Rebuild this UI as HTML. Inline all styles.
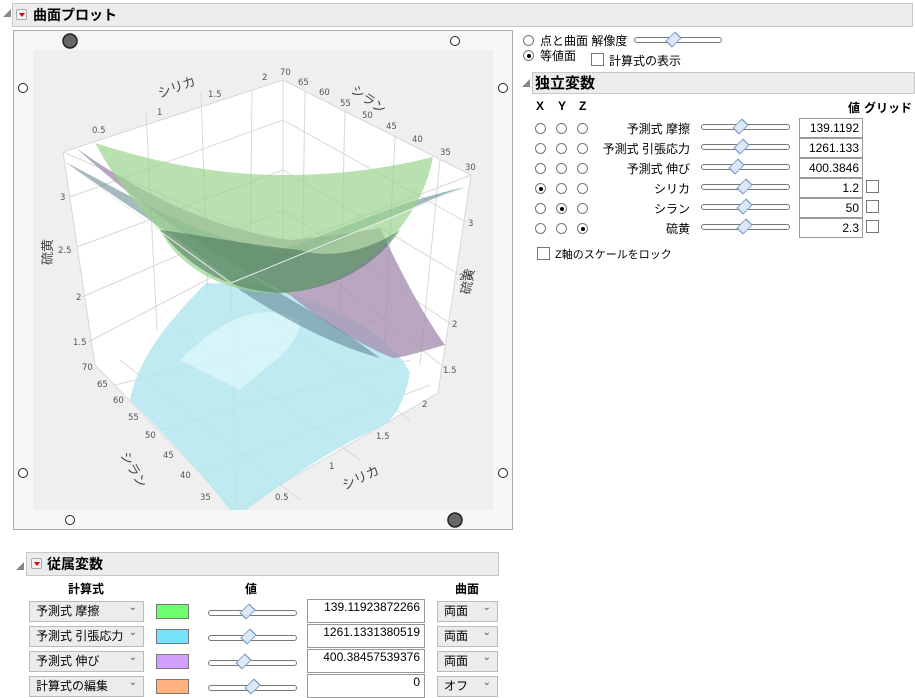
<!DOCTYPE html>
<html><head><meta charset="utf-8">
<style>
*{box-sizing:border-box;margin:0;padding:0}
body{width:915px;height:697px;background:#fff;font-family:"Liberation Sans","Noto Sans CJK JP",sans-serif;font-size:12px;color:#000;position:relative;overflow:hidden}
.a{position:absolute}
.hdr{position:absolute;background:#ececec;border:1px solid #c8c8c8;font-weight:bold;font-size:14px;padding-left:14px;line-height:22px}
.tri{position:absolute;width:0;height:0;border-left:8px solid transparent;border-bottom:8px solid #888}
.red{position:absolute;width:11px;height:11px;border:1px solid #aaa;background:#f4f4f4;border-radius:2px}
.red:after{content:"";position:absolute;left:2px;top:3px;border-left:3px solid transparent;border-right:3px solid transparent;border-top:4px solid #d00}
.rb{position:absolute;width:11px;height:11px;border:1px solid #777;border-radius:50%;background:#fff}
.rb.on:after{content:"";position:absolute;left:2.5px;top:2.5px;width:4px;height:4px;border-radius:50%;background:#000}
.cb{position:absolute;width:13px;height:13px;border:1px solid #777;background:#fff}
.sl{position:absolute;height:6px;border:1px solid #777;border-radius:3px;background:#fff}
.dm{position:absolute;width:11px;height:11px;border:1px solid #7a9cc6;background:#dce8f8;transform:rotate(45deg) scale(.85,1.25)}
.tb{position:absolute;border:1px solid #999;background:#fff;text-align:right;padding-right:3px;font-size:12px}
.cmb{position:absolute;border:1px solid #bbb;background:#ececec;font-size:12px;padding-left:6px;line-height:18px}
.cmb:after{content:"⌄";position:absolute;right:6px;top:-3px;font-size:10px;color:#555}
.lab{position:absolute;text-align:right;font-size:12px}
.sw{position:absolute;width:33px;height:15px;border:1px solid #777}
</style></head><body>

<div class="tri" style="left:3px;top:9px"></div>
<div class="hdr" style="left:12px;top:3px;width:901px;height:24px;padding-left:20px">曲面プロット</div>
<div class="red" style="left:16px;top:9px"></div>

<div class="a" style="left:13px;top:30px;width:500px;height:500px;border:1px solid #aaa;background:#f7f7f7"></div>
<svg class="a" style="left:13px;top:30px" width="500" height="500" viewBox="13 30 500 500">
<rect x="33" y="50" width="460" height="460" fill="#efefef"/>
<polygon points="63,152 283,80 471,175 438,393 236,510 95,365" fill="#fff"/>
<g stroke="#d8d8d8" stroke-width="1" fill="none">
<line x1="283" y1="80" x2="283" y2="247"/><line x1="63" y1="152" x2="283" y2="80"/><line x1="283" y1="80" x2="471" y2="175"/>
<line x1="63" y1="152" x2="95" y2="365"/><line x1="471" y1="175" x2="438" y2="393"/><line x1="231" y1="283" x2="236" y2="510"/>
<line x1="95" y1="365" x2="236" y2="510"/><line x1="236" y1="510" x2="438" y2="393"/>
<line x1="63" y1="152" x2="283" y2="247"/><line x1="283" y1="247" x2="471" y2="175"/>
<line x1="146" y1="111" x2="157" y2="330"/><line x1="201" y1="93" x2="208" y2="300"/><line x1="252" y1="90" x2="250" y2="280"/>
<line x1="305" y1="91" x2="302" y2="290"/><line x1="345" y1="110" x2="340" y2="320"/><line x1="395" y1="137" x2="385" y2="340"/><line x1="440" y1="160" x2="420" y2="365"/>
<line x1="70" y1="197" x2="283" y2="120"/><line x1="77" y1="247" x2="283" y2="170"/><line x1="82" y1="297" x2="283" y2="210"/><line x1="88" y1="342" x2="283" y2="240"/>
<line x1="283" y1="120" x2="466" y2="222"/><line x1="283" y1="170" x2="460" y2="275"/><line x1="283" y1="210" x2="452" y2="325"/><line x1="283" y1="240" x2="445" y2="368"/>
<line x1="115" y1="385" x2="380" y2="320"/><line x1="160" y1="430" x2="410" y2="360"/><line x1="200" y1="472" x2="430" y2="385"/>
<line x1="120" y1="360" x2="300" y2="500"/><line x1="180" y1="330" x2="360" y2="460"/><line x1="250" y1="300" x2="410" y2="420"/>
</g>
<path d="M130,400 C140,350 180,310 206,283 L260,285 C320,300 390,330 410,373 C405,400 395,420 380,427 C340,445 300,470 246,510 L230,510 C200,470 160,430 130,400 Z" fill="#b4e6ee" opacity=".85"/>
<path d="M180,360 C220,320 260,300 300,320 C300,350 260,370 240,390 C220,380 200,370 180,360Z" fill="#e4fcff" opacity=".6"/>
<path d="M76,148 C150,200 220,230 290,240 C330,236 360,232 380,228 C400,270 420,310 445,345 C420,352 405,357 393,358 C360,345 320,320 290,295 C220,260 150,215 76,148Z" fill="#a791b3" opacity=".8"/>
<path d="M65,162 C140,215 200,250 240,290 C300,330 350,350 380,358 C330,320 290,300 250,275 C330,250 420,200 466,187 C400,200 330,235 280,250 C200,240 140,200 65,162Z" fill="#5a808d" opacity=".55"/>
<path d="M95,143 C180,170 240,175 283,175 C350,175 400,165 433,157 C420,230 350,290 280,293 C230,295 180,270 160,230 C130,200 110,170 95,143Z" fill="#9bd48f" opacity=".7"/>
<path d="M160,230 C190,270 230,290 280,293 C340,290 380,260 400,230 C370,250 330,260 300,250 C250,245 200,235 160,230Z" fill="#3e6a55" opacity=".5"/>
<line x1="231" y1="283" x2="466" y2="187" stroke="#eee" stroke-width="1"/>
<line x1="65" y1="162" x2="231" y2="283" stroke="#eee" stroke-width="1"/>
<g font-family="DejaVu Sans,sans-serif" font-size="8.5" fill="#555">
<text x="92" y="133">0.5</text><text x="157" y="115">1</text><text x="208" y="97">1.5</text><text x="262" y="80">2</text><text x="280" y="75">70</text>
<text x="298" y="85">65</text><text x="319" y="95">60</text><text x="340" y="106">55</text><text x="362" y="118">50</text><text x="386" y="129">45</text><text x="412" y="142">40</text><text x="440" y="155">35</text><text x="465" y="170">30</text>
<text x="60" y="200">3</text><text x="58" y="253">2.5</text><text x="76" y="300">2</text><text x="73" y="345">1.5</text><text x="82" y="370">70</text>
<text x="97" y="387">65</text><text x="113" y="403">60</text><text x="128" y="420">55</text><text x="145" y="438">50</text><text x="163" y="458">45</text><text x="180" y="478">40</text><text x="200" y="500">35</text>
<text x="468" y="226">3</text><text x="459" y="280">2.5</text><text x="452" y="327">2</text><text x="443" y="373">1.5</text><text x="422" y="407">2</text><text x="376" y="439">1.5</text><text x="329" y="469">1</text><text x="275" y="500">0.5</text>
</g>
<g font-size="13" fill="#444" font-family="Noto Sans CJK JP,sans-serif">
<text x="160" y="98" transform="rotate(-20 160 98)">シリカ</text>
<text x="350" y="92" transform="rotate(35 350 92)">シラン</text>
<text x="52" y="265" transform="rotate(-90 52 265)">硫黄</text>
<text x="470" y="295" transform="rotate(-80 470 295)">硫黄</text>
<text x="345" y="490" transform="rotate(-25 345 490)">シリカ</text>
<text x="120" y="455" transform="rotate(60 120 455)">シラン</text>
</g>
<g stroke="#222" stroke-width="1" fill="#fff">
<circle cx="70" cy="41" r="7" fill="#666" stroke-width="1.5"/><circle cx="455" cy="41" r="4.5"/>
<circle cx="23" cy="88" r="4.5"/><circle cx="503" cy="88" r="4.5"/>
<circle cx="23" cy="473" r="4.5"/><circle cx="503" cy="473" r="4.5"/>
<circle cx="70" cy="520" r="4.5"/><circle cx="455" cy="520" r="7" fill="#666" stroke-width="1.5"/>
</g>
</svg>

<!-- right panel -->
<div class="rb" style="left:523px;top:35px"></div><div class="a" style="left:540px;top:32px">点と曲面 解像度</div>
<div class="sl" style="left:634px;top:37px;width:88px"></div><div class="dm" style="left:668px;top:34px"></div>
<div class="rb on" style="left:523px;top:50px"></div><div class="a" style="left:540px;top:47px">等値面</div>
<div class="cb" style="left:591px;top:53px"></div><div class="a" style="left:609px;top:52px">計算式の表示</div>

<div class="tri" style="left:522px;top:79px"></div>
<div class="hdr" style="left:532px;top:72px;width:383px;height:22px;padding-left:2px;font-size:15px">独立変数</div>
<div class="a" style="left:536px;top:99px;font-weight:bold">X</div><div class="a" style="left:558px;top:99px;font-weight:bold">Y</div><div class="a" style="left:579px;top:99px;font-weight:bold">Z</div>
<div class="a" style="left:848px;top:99px;font-weight:bold">値</div><div class="a" style="left:864px;top:99px;font-weight:bold">グリッド</div>

<div class="rb" style="left:535px;top:123px"></div><div class="rb" style="left:556px;top:123px"></div><div class="rb" style="left:577px;top:123px"></div>
<div class="lab" style="left:590px;top:120px;width:100px">予測式 摩擦</div><div class="sl" style="left:701px;top:124px;width:89px"></div><div class="dm" style="left:735px;top:121px"></div><div class="tb" style="left:799px;top:118px;width:64px;height:20px;line-height:18px">139.1192</div>
<div class="rb" style="left:535px;top:143px"></div><div class="rb" style="left:556px;top:143px"></div><div class="rb" style="left:577px;top:143px"></div>
<div class="lab" style="left:590px;top:140px;width:100px">予測式 引張応力</div><div class="sl" style="left:701px;top:144px;width:89px"></div><div class="dm" style="left:736px;top:141px"></div><div class="tb" style="left:799px;top:138px;width:64px;height:20px;line-height:18px">1261.133</div>
<div class="rb" style="left:535px;top:163px"></div><div class="rb" style="left:556px;top:163px"></div><div class="rb" style="left:577px;top:163px"></div>
<div class="lab" style="left:590px;top:160px;width:100px">予測式 伸び</div><div class="sl" style="left:701px;top:164px;width:89px"></div><div class="dm" style="left:731px;top:161px"></div><div class="tb" style="left:799px;top:158px;width:64px;height:20px;line-height:18px">400.3846</div>
<div class="rb on" style="left:535px;top:183px"></div><div class="rb" style="left:556px;top:183px"></div><div class="rb" style="left:577px;top:183px"></div>
<div class="lab" style="left:590px;top:180px;width:100px">シリカ</div><div class="sl" style="left:701px;top:184px;width:89px"></div><div class="dm" style="left:739px;top:181px"></div><div class="tb" style="left:799px;top:178px;width:64px;height:20px;line-height:18px">1.2</div><div class="cb" style="left:866px;top:180px"></div>
<div class="rb" style="left:535px;top:203px"></div><div class="rb on" style="left:556px;top:203px"></div><div class="rb" style="left:577px;top:203px"></div>
<div class="lab" style="left:590px;top:200px;width:100px">シラン</div><div class="sl" style="left:701px;top:204px;width:89px"></div><div class="dm" style="left:739px;top:201px"></div><div class="tb" style="left:799px;top:198px;width:64px;height:20px;line-height:18px">50</div><div class="cb" style="left:866px;top:200px"></div>
<div class="rb" style="left:535px;top:223px"></div><div class="rb" style="left:556px;top:223px"></div><div class="rb on" style="left:577px;top:223px"></div>
<div class="lab" style="left:590px;top:220px;width:100px">硫黄</div><div class="sl" style="left:701px;top:224px;width:89px"></div><div class="dm" style="left:739px;top:221px"></div><div class="tb" style="left:799px;top:218px;width:64px;height:20px;line-height:18px">2.3</div><div class="cb" style="left:866px;top:220px"></div>
<div class="cb" style="left:537px;top:247px"></div><div class="a" style="left:555px;top:246px;font-size:11px">Z軸のスケールをロック</div>

<!-- bottom panel -->
<div class="tri" style="left:16px;top:562px"></div>
<div class="hdr" style="left:26px;top:552px;width:473px;height:24px;padding-left:20px">従属変数</div>
<div class="red" style="left:31px;top:558px"></div>
<div class="a" style="left:68px;top:580px;font-weight:bold">計算式</div>
<div class="a" style="left:245px;top:580px;font-weight:bold">値</div>
<div class="a" style="left:455px;top:580px;font-weight:bold">曲面</div>

<div class="cmb" style="left:29px;top:601px;width:115px;height:21px">予測式 摩擦</div><div class="sw" style="left:156px;top:604px;background:#6cfe6c"></div>
<div class="sl" style="left:208px;top:610px;width:89px"></div><div class="dm" style="left:242px;top:606px"></div>
<div class="tb" style="left:307px;top:599px;width:118px;height:24px;line-height:14px;padding-right:4px">139.11923872266</div>
<div class="cmb" style="left:437px;top:601px;width:61px;height:21px">両面</div>

<div class="cmb" style="left:29px;top:626px;width:115px;height:21px">予測式 引張応力</div><div class="sw" style="left:156px;top:629px;background:#76e3fd"></div>
<div class="sl" style="left:208px;top:635px;width:89px"></div><div class="dm" style="left:243px;top:631px"></div>
<div class="tb" style="left:307px;top:624px;width:118px;height:24px;line-height:14px;padding-right:4px">1261.1331380519</div>
<div class="cmb" style="left:437px;top:626px;width:61px;height:21px">両面</div>

<div class="cmb" style="left:29px;top:651px;width:115px;height:21px">予測式 伸び</div><div class="sw" style="left:156px;top:654px;background:#d3a0fd"></div>
<div class="sl" style="left:208px;top:660px;width:89px"></div><div class="dm" style="left:238px;top:656px"></div>
<div class="tb" style="left:307px;top:649px;width:118px;height:24px;line-height:14px;padding-right:4px">400.38457539376</div>
<div class="cmb" style="left:437px;top:651px;width:61px;height:21px">両面</div>

<div class="cmb" style="left:29px;top:676px;width:115px;height:21px">計算式の編集</div><div class="sw" style="left:156px;top:679px;background:#feb27f"></div>
<div class="sl" style="left:208px;top:685px;width:89px"></div><div class="dm" style="left:247px;top:681px"></div>
<div class="tb" style="left:307px;top:674px;width:118px;height:24px;line-height:14px;padding-right:4px">0</div>
<div class="cmb" style="left:437px;top:676px;width:61px;height:21px">オフ</div>
</body></html>
